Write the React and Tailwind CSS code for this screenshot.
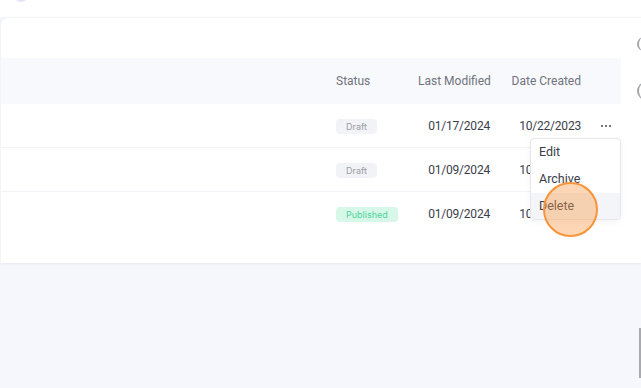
import React from 'react';

const ROWS = [
  { status: 'Draft', modified: '01/17/2024', created: '10/22/2023', dots: true },
  { status: 'Draft', modified: '01/09/2024', created: '10/22/2023' },
  { status: 'Published', modified: '01/09/2024', created: '10/22/2023' },
];

function Badge({ status }) {
  const tone =
    status === 'Published'
      ? 'bg-[#d7f8e9] text-[#4fd39a]'
      : 'bg-[#f2f3f6] text-[#9a9ca4]';
  return (
    <span
      className={`inline-flex items-center h-[15px] px-[10px] rounded-[4px] text-[9px] leading-none ${tone}`}
      style={{ fontFamily: 'Inter, sans-serif' }}
    >
      {status}
    </span>
  );
}

export default function App() {
  return (
    <div
      className="relative w-full h-[388px] overflow-hidden bg-[#f6f7fc] text-[#3a3d4a]"
      style={{ fontFamily: 'Roboto, "Noto Sans", sans-serif' }}
    >
      <div className="relative h-[17px] bg-white">
        <div className="absolute left-[14px] top-[-12px] w-[14px] h-[14px] rounded-full bg-[#e3e4f6]" />
      </div>

      <div className="relative h-[246px] bg-white rounded-tl-lg border-l border-t border-[#f3f4f7] shadow-[0_1px_3px_rgba(30,40,90,0.06)]">
        <div className="h-[40px]" />
        <div className="flex items-center h-[46px] w-[620px] bg-[#f8f9fc] text-[12px] text-[#70737d]">
          <div className="w-[335px]" />
          <div className="w-[82px]">Status</div>
          <div className="w-[72px] text-right whitespace-nowrap">Last Modified</div>
          <div className="w-[91px] text-right whitespace-nowrap">Date Created</div>
          <div className="w-[40px]" />
        </div>
        {ROWS.map((r, i) => (
          <div
            key={i}
            className={`flex items-center h-[44px] w-[620px] text-[12px] tracking-[-0.2px] text-[#3a3d4a] ${i < 2 ? 'border-b border-[#f2f3f6]' : ''}`}
          >
            <div className="w-[335px]" />
            <div className="w-[82px] tracking-normal">
              <Badge status={r.status} />
            </div>
            <div className="w-[72px] text-right">{r.modified}</div>
            <div className="w-[91px] text-right">{r.created}</div>
            <div className="w-[40px] flex justify-end pr-[10px]">
              {r.dots && (
                <span className="flex gap-[2px]">
                  <span className="w-[2px] h-[2px] rounded-full bg-[#4b4e5a]" />
                  <span className="w-[2px] h-[2px] rounded-full bg-[#4b4e5a]" />
                  <span className="w-[2px] h-[2px] rounded-full bg-[#4b4e5a]" />
                </span>
              )}
            </div>
          </div>
        ))}

        <div className="absolute left-[529px] top-[120px] w-[91px] h-[82px] bg-white border border-[#e6e7ec] rounded-[4px] shadow-[0_2px_6px_rgba(0,0,0,0.05)] text-[12.5px] text-[#3a3d4a] overflow-hidden">
          <div className="h-[27px] flex items-center pl-[8px]">Edit</div>
          <div className="h-[27px] flex items-center pl-[8px]">Archive</div>
          <div className="h-[27px] flex items-center pl-[8px] bg-[#f4f5f8]">Delete</div>
        </div>

        <div className="absolute left-[542px] top-[164px] w-[55px] h-[55px] rounded-full bg-[#f99a45]/40 border-2 border-[#f8943a]" />
      </div>

      <div className="absolute left-[637px] top-[37px] w-[10px] h-[14px] rounded-l-full border-l-2 border-[#a3a5ac]" />
      <div className="absolute left-[637px] top-[82px] w-[10px] h-[18px] rounded-l-full border-l-2 border-[#a3a5ac]" />
      <div className="absolute left-[639px] top-[328px] w-[2px] h-[50px] bg-[#a8aab0]" />
    </div>
  );
}
